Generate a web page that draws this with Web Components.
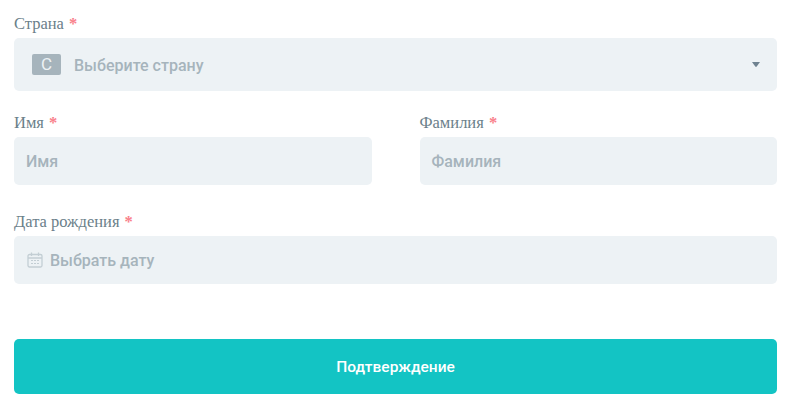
<!DOCTYPE html>
<html lang="ru">
<head>
<meta charset="utf-8">
<title>Форма</title>
<style>
  html, body { margin: 0; background: #fff; }
  body { width: 800px; height: 407px; overflow: hidden; }
</style>
</head>
<body>
<profile-form>
  <form-field label="Страна" gap="21">
    <select-box placeholder="Выберите страну" letter="С"></select-box>
  </form-field>
  <form-row>
    <form-field label="Имя" gap="26"><text-box placeholder="Имя"></text-box></form-field>
    <form-field label="Фамилия" gap="26"><text-box placeholder="Фамилия"></text-box></form-field>
  </form-row>
  <form-field label="Дата рождения" gap="24">
    <text-box placeholder="Выбрать дату" icon></text-box>
  </form-field>
  <submit-button>Подтверждение</submit-button>
</profile-form>

<script>
const boxCss = `
  :host { display: flex; align-items: center; box-sizing: border-box; background: #edf2f5; border-radius: 5px;
    font: 500 16px Roboto, sans-serif; color: #a6b4bc; }
`

class ProfileForm extends HTMLElement {
  constructor() {
    super()
    this.attachShadow({ mode: 'open' }).innerHTML = `
      <style>
        :host { display: flex; flex-direction: column; box-sizing: border-box; width: 800px; padding: 13px 23px 0 14px; }
      </style>
      <slot></slot>
    `
  }
}

class FormRow extends HTMLElement {
  constructor() {
    super()
    this.attachShadow({ mode: 'open' }).innerHTML = `
      <style>
        :host { display: grid; grid-template-columns: 358px 357.5px; column-gap: 47.5px; }
      </style>
      <slot></slot>
    `
  }
}

class FormField extends HTMLElement {
  constructor() {
    super()
    this.attachShadow({ mode: 'open' }).innerHTML = `
      <style>
        :host { display: block; margin-bottom: ${this.getAttribute('gap')}px; }
        label { display: block; box-sizing: border-box; height: 25px; padding-top: 1px;
          font: 16.5px/20px "Liberation Serif", serif; color: #6b7f8a; }
        span { color: #f9808a; margin-left: 1px; font-weight: 700; line-height: 16px; }
      </style>
      <label>${this.getAttribute('label')} <span>*</span></label>
      <slot></slot>
    `
  }
}

class SelectBox extends HTMLElement {
  constructor() {
    super()
    this.attachShadow({ mode: 'open' }).innerHTML = `
      <style>
        ${boxCss}
        :host { height: 53px; padding: 1px 17px 0 18px; }
        .letter { width: 29px; height: 21px; margin: -1px 13px 0 0; background: #a6b4bc; border-radius: 2px;
          color: #edf2f5; font-size: 17px; font-weight: 400; text-align: center; line-height: 21px; }
        .text { flex: 1; }
        svg { display: block; margin-top: -1px; }
      </style>
      <div class="letter">${this.getAttribute('letter')}</div>
      <div class="text">${this.getAttribute('placeholder')}</div>
      <svg width="8" height="5" viewBox="0 0 8 5"><path d="M0 0h8L4.7 4.6a1 1 0 0 1-1.4 0z" fill="#6f8290"/></svg>
    `
  }
}

class TextBox extends HTMLElement {
  constructor() {
    super()
    const icon = this.hasAttribute('icon') ? `
      <svg width="16" height="16" viewBox="0 0 16 16" fill="none" stroke="#c3ced4" stroke-width="1.3">
        <rect x="1" y="2.5" width="14" height="12.5" rx="1.5"/>
        <path d="M1 6h14M4.5 .5v3.5M11.5 .5v3.5"/>
        <path d="M4 8.5h2M7 8.5h2M10 8.5h2M4 11.5h2M7 11.5h2M10 11.5h2" stroke-width="1.1"/>
      </svg>` : ''
    this.attachShadow({ mode: 'open' }).innerHTML = `
      <style>
        ${boxCss}
        :host { height: 48px; padding: 0 12px; gap: 7px; }
        svg { display: block; margin-left: 1px; }
      </style>
      ${icon}<div>${this.getAttribute('placeholder')}</div>
    `
  }
}

class SubmitButton extends HTMLElement {
  constructor() {
    super()
    this.attachShadow({ mode: 'open' }).innerHTML = `
      <style>
        :host { display: flex; align-items: center; justify-content: center; height: 55px; margin-top: 31px;
          background: #13c4c4; border-radius: 5px; color: #fff; font: 500 15.5px Roboto, sans-serif; }
      </style>
      <slot></slot>
    `
  }
}

customElements.define('profile-form', ProfileForm)
customElements.define('form-row', FormRow)
customElements.define('form-field', FormField)
customElements.define('select-box', SelectBox)
customElements.define('text-box', TextBox)
customElements.define('submit-button', SubmitButton)
</script>
</body>
</html>
